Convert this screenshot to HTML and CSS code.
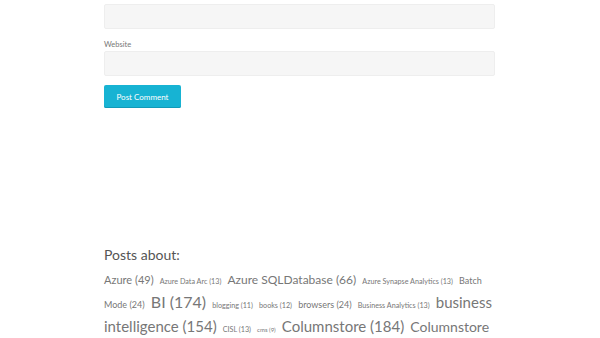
FILE: index.html
```html
<!DOCTYPE html>
<html lang="en">
  <head>
    <meta charset="UTF-8" />
    <meta name="viewport" content="width=device-width, initial-scale=1.0" />
    <title>Leave a comment</title>
    <link rel="stylesheet" href="styles.css">
  </head>
  <body>
    <div class="content">
      <form class="comment-form">
        <p class="field">
          <label for="email">Email</label>
          <input id="email" type="text" />
        </p>
        <p class="field">
          <label for="url">Website</label>
          <input id="url" type="text" />
        </p>
        <p class="form-submit">
          <button type="button" class="submit">Post Comment</button>
        </p>
      </form>

      <div class="widget tags">
        <h3 class="widget-title">Posts about:</h3>
        <div class="tagcloud">
          <a href="#" class="t-lg">Azure (49)</a>
          <a href="#" class="t-xs">Azure Data Arc (13)</a>
          <a href="#" class="t-lg2">Azure SQLDatabase (66)</a>
          <a href="#" class="t-xs">Azure Synapse Analytics (13)</a>
          <a href="#" class="t-sm">Batch Mode (24)</a>
          <a href="#" class="t-xxl">BI (174)</a>
          <a href="#" class="t-xs">blogging (11)</a>
          <a href="#" class="t-xs">books (12)</a>
          <a href="#" class="t-sm">browsers (24)</a>
          <a href="#" class="t-xs">Business Analytics (13)</a>
          <a href="#" class="t-xl">business intelligence (154)</a>
          <a href="#" class="t-xs">CISL (13)</a>
          <a href="#" class="t-xxs">cms (9)</a>
          <a href="#" class="t-xl">Columnstore (184)</a>
          <a href="#" class="t-xl2">Columnstore Indexes (120)</a>
        </div>
      </div>
    </div>
  </body>
</html>
```

FILE: styles.css
```css
body {
  margin: 0;
  background: #fff;
  font-family: Lato, "Open Sans", sans-serif;
  color: #666;
  overflow: hidden;
}

.content {
  width: 391px;
  margin: 0 0 0 104px;
}

.comment-form {
  margin-top: -8px;
}

.field {
  margin: 0 0 10px;
}

.field label {
  display: block;
  font-size: 7.5px;
  line-height: 12px;
  color: #777;
}

.field input {
  display: block;
  box-sizing: border-box;
  width: 100%;
  height: 25px;
  margin: 0;
  border: 1px solid #eee;
  border-radius: 2px;
  background: #f6f6f6;
}

.form-submit {
  margin: -1px 0 0;
}

.submit {
  display: block;
  width: 77px;
  height: 23px;
  border: none;
  border-radius: 2px;
  background: #17b3d3;
  box-shadow: inset 0 -1px 0 #109ab8;
  color: #fff;
  font-family: inherit;
  font-size: 8px;
  cursor: pointer;
}

.widget {
  margin-top: 137px;
}

.widget-title {
  margin: 0 0 1px;
  font-weight: normal;
  font-size: 14px;
  line-height: 20px;
  color: #555;
}

.tagcloud {
  font-size: 16px;
  line-height: 24px;
}

.tagcloud a {
  color: #777;
  text-decoration: none;
  line-height: 1;
  margin-right: 2px;
}

.t-xxs { font-size: 6px; }
.t-xs { font-size: 7.2px; }
.t-sm { font-size: 9px; }
.t-lg { font-size: 11px; }
.t-lg2 { font-size: 12px; }
.t-xl2 { font-size: 14px; }
.t-xl { font-size: 15px; }
.t-xxl { font-size: 16px; }
```
